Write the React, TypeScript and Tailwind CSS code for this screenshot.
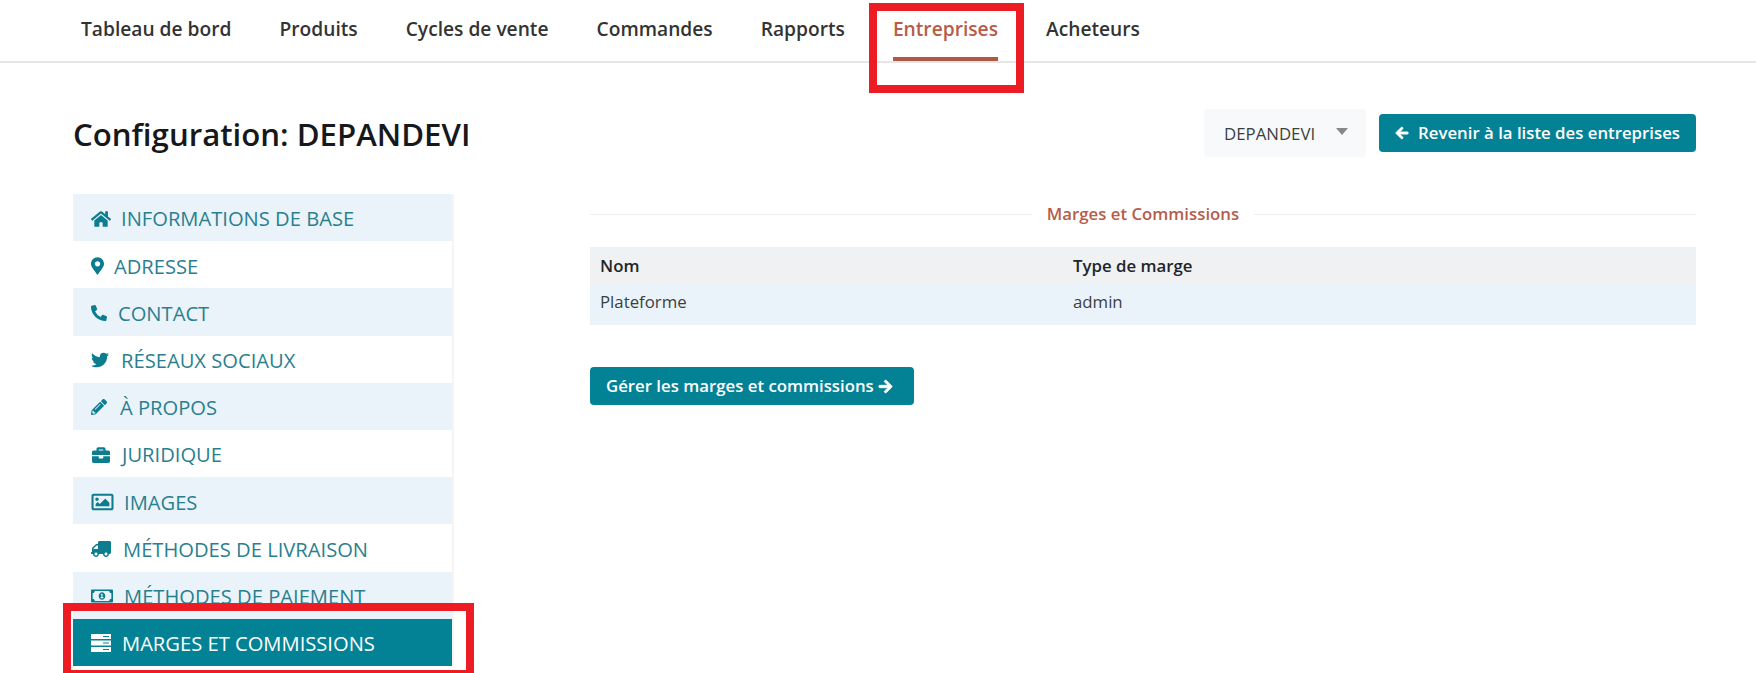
import {
  FaArrowLeft,
  FaArrowRight,
  FaBriefcase,
  FaHome,
  FaMapMarkerAlt,
  FaPencilAlt,
  FaPhoneAlt,
  FaRegImage,
  FaRegMoneyBillAlt,
  FaTruck,
  FaTwitter,
} from "react-icons/fa";

const navLinks = ["Tableau de bord", "Produits", "Cycles de vente", "Commandes", "Rapports", "Entreprises", "Acheteurs"];

function ServerIcon() {
  return (
    <svg width="20" height="18" viewBox="0 0 20 18" fill="currentColor">
      <rect y="0" width="20" height="5" />
      <rect y="6.5" width="20" height="5" />
      <rect y="13" width="20" height="5" />
      <rect x="12" y="2" width="6" height="1" fill="#038296" />
      <rect x="12" y="8.5" width="6" height="1" fill="#038296" />
      <rect x="12" y="15" width="6" height="1" fill="#038296" />
    </svg>
  );
}

const sideLinks = [
  { label: "INFORMATIONS DE BASE", icon: <FaHome className="h-[18px] w-[20px]" />, gap: "gap-[10px]" },
  { label: "ADRESSE", icon: <FaMapMarkerAlt className="h-[18px] w-[13px]" />, gap: "gap-[10px]" },
  { label: "CONTACT", icon: <FaPhoneAlt className="h-[16px] w-[16px]" />, gap: "gap-[11px]" },
  { label: "RÉSEAUX SOCIAUX", icon: <FaTwitter className="h-[18px] w-[18px]" />, gap: "gap-[12px]" },
  { label: "À PROPOS", icon: <FaPencilAlt className="h-[16px] w-[16px]" />, gap: "gap-[13px]" },
  { label: "JURIDIQUE", icon: <FaBriefcase className="h-[18px] w-[20px]" />, gap: "gap-[11px]" },
  { label: "IMAGES", icon: <FaRegImage className="h-[22px] w-[23px]" />, gap: "gap-[10px]" },
  { label: "MÉTHODES DE LIVRAISON", icon: <FaTruck className="h-[18px] w-[20px] -scale-x-100" />, gap: "gap-[12px]" },
  { label: "MÉTHODES DE PAIEMENT", icon: <FaRegMoneyBillAlt className="h-[18px] w-[22px]" />, gap: "gap-[11px]" },
  { label: "MARGES ET COMMISSIONS", icon: <ServerIcon />, gap: "gap-[11px]" },
];

export default function App() {
  return (
    <div className="relative h-[673px] overflow-hidden bg-white font-['Open_Sans',sans-serif] text-[#212529]">
      {/* Top nav */}
      <nav className="flex h-[63px] gap-[48px] border-b-2 border-[#e6e6e6] pl-[81px]">
        {navLinks.map((link) => (
          <a
            key={link}
            className={`h-[61px] pt-[14px] text-[19.2px] leading-[29px] font-semibold ${
              link === "Entreprises" ? "border-b-[4px] border-[#b05a45] text-[#b85c48]" : "text-[#333333]"
            }`}
          >
            {link}
          </a>
        ))}
      </nav>

      <div className="flex items-center justify-between pt-[46px] pr-[60px] pl-[73px]">
        <h1 className="pt-[1px] text-[31.2px] leading-[44px] font-semibold text-[#16181b]">Configuration: DEPANDEVI</h1>
        <div className="flex items-center gap-[13px]">
          <div className="flex h-[48px] w-[162px] items-center rounded-[4px] bg-[#f8f9fa] pl-[20px] text-[16.8px] text-[#3a3f44]">
            <span className="pt-[2px]">DEPANDEVI</span>
            <span className="mb-[4px] ml-[21px] h-0 w-0 border-x-[6px] border-t-[7px] border-x-transparent border-t-[#888888]" />
          </div>
          <a className="flex h-[38px] items-center gap-[9px] rounded-[4px] bg-[#038296] px-[16px] text-[16.8px] font-semibold text-white">
            <FaArrowLeft className="h-[14px] w-[14px] stroke-current stroke-[30]" />
            Revenir à la liste des entreprises
          </a>
        </div>
      </div>

      <div className="flex pt-[37px] pr-[60px] pl-[73px]">
        {/* Side menu */}
        <aside className="w-[381px] shrink-0 border-r-2 border-[#f5f5f5]">
          {sideLinks.map((item, i) => {
            const active = item.label === "MARGES ET COMMISSIONS";
            return (
              <a
                key={item.label}
                className={`flex h-[47.2px] items-center pt-[2px] pl-[18px] text-[20.16px] ${item.gap} ${
                  active
                    ? "bg-[#038296] text-white"
                    : i % 2 === 0
                      ? "bg-[#eaf3fa] text-[#2a7f8f]"
                      : "bg-white text-[#2a7f8f]"
                }`}
              >
                <span className={active ? "text-white" : "text-[#0b7d8f]"}>{item.icon}</span>
                {item.label}
              </a>
            );
          })}
        </aside>

        {/* Content */}
        <main className="ml-[136px] flex-1">
          <div className="flex items-center gap-[15px] pt-[8px]">
            <div className="h-px flex-1 bg-[#eeeeee]" />
            <h2 className="text-[16.8px] leading-[24px] font-semibold text-[#b85c48]">Marges et Commissions</h2>
            <div className="h-px flex-1 bg-[#eeeeee]" />
          </div>
          <table className="mt-[21px] w-full text-[16.8px]">
            <thead>
              <tr className="bg-[#eff1f3] text-left">
                <th className="h-[36px] w-[483px] pt-[1px] pl-[10px] font-semibold">Nom</th>
                <th className="pt-[1px] font-semibold">Type de marge</th>
              </tr>
            </thead>
            <tbody>
              <tr className="bg-[#eaf3fa] text-[#3a3f44]">
                <td className="h-[42px] pb-[4px] pl-[10px]">Plateforme</td>
                <td className="pb-[4px]">admin</td>
              </tr>
            </tbody>
          </table>
          <a className="mt-[42px] flex h-[38px] w-[324px] items-center gap-[4px] rounded-[4px] bg-[#038296] pl-[16px] text-[16.8px] font-semibold text-white">
            Gérer les marges et commissions
            <FaArrowRight className="h-[15px] w-[15px] stroke-current stroke-[30]" />
          </a>
        </main>
      </div>

      {/* Red annotation frames */}
      <div className="absolute top-[3px] left-[869px] h-[90px] w-[155px] border-[8px] border-[#ed1c24]" />
      <div className="absolute top-[603px] left-[63px] h-[70px] w-[411px] border-x-[8px] border-t-[8px] border-b-[3px] border-[#ed1c24]" />
    </div>
  );
}
